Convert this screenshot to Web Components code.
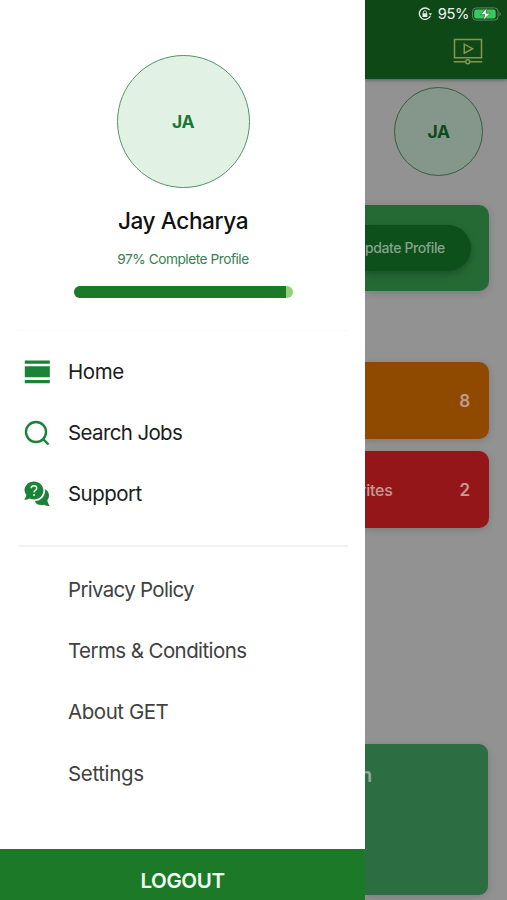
<!DOCTYPE html>
<html lang="en">
<head>
  <meta charset="UTF-8">
  <meta name="viewport" content="width=device-width, initial-scale=1.0">
  <title>GET Jobs</title>
  <style>
    body {
      margin: 0;
      height: 900px;
      overflow: hidden;
      font-family: Inter, "Liberation Sans", sans-serif;
    }
  </style>
</head>
<body>
  <app-shell>
    <side-drawer slot="drawer">
      <drawer-profile slot="profile" percent="97">
        <user-avatar slot="avatar" size="133">JA</user-avatar>
        <span slot="name">Jay Acharya</span>
        <span slot="status">97% Complete Profile</span>
      </drawer-profile>
      <menu-item slot="main" icon="home" spacing="-0.45px">Home</menu-item>
      <menu-item slot="main" icon="search" spacing="-0.63px">Search Jobs</menu-item>
      <menu-item slot="main" icon="support" spacing="-0.55px">Support</menu-item>
      <menu-item slot="more" spacing="-0.7px">Privacy Policy</menu-item>
      <menu-item slot="more" spacing="-0.58px">Terms &amp; Conditions</menu-item>
      <menu-item slot="more" spacing="-0.45px">About GET</menu-item>
      <menu-item slot="more" spacing="-0.35px">Settings</menu-item>
      <span slot="logout">LOGOUT</span>
    </side-drawer>
    <dashboard-page>
      <status-bar slot="top">95%</status-bar>
      <user-avatar slot="avatar" size="89" dim>JA</user-avatar>
      <span slot="action">pdate Profile</span>
      <stat-card slot="stats" color="#8f4a00" count="8"></stat-card>
      <stat-card slot="stats" color="#951619" count="2">rites</stat-card>
      <span slot="promo">n</span>
    </dashboard-page>
  </app-shell>

  <script>
    const icons = {
      home: `<svg width="26" height="26" viewBox="0 0 26 26" fill="#1b8238">
        <path d="M.8 1.500h25v3.200H.8zM.8 7.300h25v11H.8zM.8 21h25v3.200H.8z"/>
      </svg>`,
      search: `<svg width="26" height="26" viewBox="0 0 26 26" fill="none" stroke="#1b8238" stroke-width="2.400">
        <circle cx="12" cy="12" r="10"/>
        <path d="M19 19.100l5.600 5.400"/>
      </svg>`,
      support: `<svg width="26" height="26" viewBox="0 0 26 26" fill="#1b8238">
        <path d="M21.200 8.300c2.300 1.200 3.800 3.500 3.800 6.200 0 1.800-.6 3.300-1.600 4.600.1 2 .8 3.700 2 5.400v.6c-2 0-3.900-.5-5.500-1.400-4.500 1.300-8.300-.6-9.200-3.600 6.500 0 10.700-5.100 10.500-11.800z"/>
        <path d="M9.900.5c5.300 0 9.500 3.900 9.500 8.900s-4.200 9-9.500 9c-1.500 0-3-.4-4.200-1-1.600.8-3.400 1.300-5.200 1.300v-.6c1.100-1.300 1.700-2.700 1.800-4.300A8.700 8.700 0 0 1 .5 9.400c0-5 4.100-8.900 9.400-8.900z"/>
        <path d="M7.200 7.300c0-3.400 5.500-3.300 5.500-.1 0 2.300-2.700 2-2.700 4.400" fill="none" stroke="#e9f7ec" stroke-width="1.500"/>
        <circle cx="10" cy="14" r="1" fill="#e9f7ec"/>
      </svg>`
    };

    class AppShell extends HTMLElement {
      constructor() {
        super();
        this.attachShadow({ mode: 'open' });
        this.shadowRoot.innerHTML = `
          <style>
            :host {
              display: grid;
              grid-template-columns: 365px 1fr;
              height: 900px;
              overflow: hidden;
            }
          </style>
          <slot name="drawer"></slot>
          <slot></slot>
        `;
      }
    }

    class UserAvatar extends HTMLElement {
      constructor() {
        super();
        this.attachShadow({ mode: 'open' });
        const size = this.getAttribute('size');
        this.shadowRoot.innerHTML = `
          <style>
            :host {
              display: flex;
              align-items: center;
              justify-content: center;
              box-sizing: border-box;
              width: ${size}px;
              height: ${size}px;
              border: 1.5px solid #55936b;
              border-radius: 50%;
              background: #e1f2e4;
              color: #1d7634;
              font-size: 17.5px;
              font-weight: 700;
              letter-spacing: -.5px;
            }
            :host([dim]) {
              border-color: #34603f;
              background: #85968a;
              color: #0f4a1d;
            }
          </style>
          <slot></slot>
        `;
      }
    }

    class DrawerProfile extends HTMLElement {
      constructor() {
        super();
        this.attachShadow({ mode: 'open' });
        this.shadowRoot.innerHTML = `
          <style>
            :host {
              display: flex;
              flex: none;
              flex-direction: column;
              align-items: center;
              box-sizing: border-box;
              height: 330px;
              padding: 55px 0 0 1px;
            }
            .name {
              margin-top: 18px;
              font-size: 22.6px;
              line-height: 30px;
              font-weight: 500;
              letter-spacing: -.4px;
              color: #111;
            }
            .status {
              margin-top: 13px;
              font-size: 13.7px;
              line-height: 20px;
              letter-spacing: -.47px;
              color: #388052;
            }
            .bar {
              width: 219px;
              height: 12px;
              margin-top: 17px;
              border-radius: 6px;
              background: #94cf79;
              overflow: hidden;
            }
            .fill {
              width: ${this.getAttribute('percent')}%;
              height: 100%;
              background: #1b7928;
            }
          </style>
          <slot name="avatar"></slot>
          <div class="name"><slot name="name"></slot></div>
          <div class="status"><slot name="status"></slot></div>
          <div class="bar"><div class="fill"></div></div>
        `;
      }
    }

    class MenuItem extends HTMLElement {
      constructor() {
        super();
        this.attachShadow({ mode: 'open' });
        const icon = this.getAttribute('icon');
        this.shadowRoot.innerHTML = `
          <style>
            :host {
              display: grid;
              grid-template-columns: 26px 1fr;
              column-gap: 18px;
              align-items: center;
              height: 61.2px;
              padding-left: 24px;
              font-size: 20.5px;
              letter-spacing: ${this.getAttribute('spacing')};
              color: ${icon ? '#1c1c1c' : '#414141'};
              white-space: nowrap;
            }
            .icon {
              display: flex;
            }
          </style>
          <div class="icon">${icons[icon] || ''}</div>
          <div><slot></slot></div>
        `;
      }
    }

    class SideDrawer extends HTMLElement {
      constructor() {
        super();
        this.attachShadow({ mode: 'open' });
        this.shadowRoot.innerHTML = `
          <style>
            :host {
              display: flex;
              flex-direction: column;
              height: 900px;
              background: #fff;
              overflow: hidden;
            }
            hr {
              flex: none;
              width: 329px;
              height: 1px;
              margin: 0 0 0 19px;
              border: 0;
              background: #fafafa;
            }
            hr.strong {
              height: 2px;
              background: #f2f2f2;
            }
            nav {
              flex: none;
              padding: 10px 0 20.4px;
            }
            nav.more {
              padding: 12px 0 45px;
            }
            .logout {
              flex: none;
              height: 62px;
              line-height: 63px;
              background: #1b7928;
              color: #f2fff2;
              font-size: 20.5px;
              font-weight: 600;
              letter-spacing: -.4px;
              text-align: center;
            }
          </style>
          <slot name="profile"></slot>
          <hr>
          <nav><slot name="main"></slot></nav>
          <hr class="strong">
          <nav class="more"><slot name="more"></slot></nav>
          <div class="logout"><slot name="logout"></slot></div>
        `;
      }
    }

    class StatusBar extends HTMLElement {
      constructor() {
        super();
        this.attachShadow({ mode: 'open' });
        this.shadowRoot.innerHTML = `
          <style>
            :host {
              display: flex;
              align-items: center;
              justify-content: flex-end;
              height: 27px;
              padding-right: 6px;
              color: #eef3ee;
              font-size: 14.7px;
              letter-spacing: -.4px;
            }
            .lock { margin-right: 6px; }
            .battery { margin-left: 3px; }
          </style>
          <svg class="lock" width="14" height="14" viewBox="0 0 14 14" fill="none" stroke="#e5eee5">
            <path d="M11.600 3.200A5.700 5.700 0 1 0 12.300 9" stroke-width="1.300"/>
            <path d="M10.800 6.200h3.200l-1.600 2.600z" fill="#e5eee5" stroke="none"/>
            <path d="M5.400 6.500V5.300c0-2 3-2 3 0v1.200" stroke-width="1"/>
            <path d="M4.500 6.300h4.800v3.700H4.500z" fill="#e5eee5" stroke="none"/>
          </svg>
          <slot></slot>
          <svg class="battery" width="29" height="14" viewBox="0 0 29 14">
            <rect x=".6" y=".9" width="25.500" height="12.200" rx="3.600" fill="none" stroke="#5f8765"/>
            <rect x="2.200" y="2.500" width="21.500" height="9" rx="2.200" fill="#38c862"/>
            <path d="M27.500 4.800c1.600.8 1.600 3.600 0 4.400z" fill="#5f8765"/>
            <path d="M15 .8L8.500 7.600h4.200L11.400 13.200l6.900-7h-4.400z" fill="#fff" stroke="#125020" stroke-width=".6"/>
          </svg>
        `;
      }
    }

    class StatCard extends HTMLElement {
      constructor() {
        super();
        this.attachShadow({ mode: 'open' });
        this.shadowRoot.innerHTML = `
          <style>
            :host {
              display: flex;
              align-items: center;
              justify-content: space-between;
              box-sizing: border-box;
              width: 124px;
              height: 77px;
              padding-right: 19px;
              border-radius: 0 10px 10px 0;
              background: ${this.getAttribute('color')};
              box-shadow: 0 2px 7px rgba(0, 0, 0, .16);
              color: #c49a92;
              font-size: 16px;
              font-weight: 500;
              letter-spacing: -.2px;
            }
            .label {
              margin-left: -5px;
            }
            .count {
              font-size: 17px;
              font-weight: 600;
            }
          </style>
          <span class="label"><slot></slot></span>
          <span class="count">${this.getAttribute('count')}</span>
        `;
      }
    }

    class DashboardPage extends HTMLElement {
      constructor() {
        super();
        this.attachShadow({ mode: 'open' });
        this.shadowRoot.innerHTML = `
          <style>
            :host {
              display: flex;
              flex-direction: column;
              height: 900px;
              background: #929292;
              overflow: hidden;
            }
            header {
              display: flex;
              flex-direction: column;
              height: 79px;
              background: #0f4817;
              box-shadow: 0 1px 4px rgba(0, 0, 0, .4);
            }
            .video {
              align-self: flex-end;
              margin: 11px 24px 0 0;
            }
            .avatar {
              padding: 8px 0 0 29px;
            }
            .update {
              display: flex;
              align-items: center;
              box-sizing: border-box;
              width: 124px;
              height: 86px;
              margin-top: 29px;
              border-radius: 0 10px 10px 0;
              background: #256a35;
              box-shadow: 0 2px 8px rgba(0, 0, 0, .16);
            }
            .button {
              width: 106px;
              height: 46px;
              line-height: 45px;
              border-radius: 0 23px 23px 0;
              background: #0e501b;
              box-shadow: 0 3px 7px rgba(0, 0, 0, .25);
              color: #85a38a;
              font-size: 14px;
              font-weight: 500;
              letter-spacing: -.4px;
              white-space: nowrap;
            }
            .stats {
              display: flex;
              flex-direction: column;
              gap: 12px;
              margin-top: 71px;
            }
            .promo {
              box-sizing: border-box;
              width: 123px;
              height: 151px;
              margin-top: 216px;
              padding-top: 17px;
              border-radius: 0 9px 9px 0;
              background: #2c6d41;
              box-shadow: 0 2px 8px rgba(0, 0, 0, .14);
              color: #91aa97;
              font-size: 20px;
              line-height: 28px;
              font-weight: 600;
              text-indent: -5px;
            }
          </style>
          <header>
            <slot name="top"></slot>
            <svg class="video" width="30" height="27" viewBox="0 0 30 27" fill="none" stroke="#8c944a" stroke-width="1.500">
              <path d="M1.500 1.500h27v18.300h-27z"/>
              <path d="M11.300 6.200v9l8.300-4.500z"/>
              <path d="M.7 23.700h11.800M17.200 23.700h12"/>
              <circle cx="14.800" cy="23.700" r="2"/>
            </svg>
          </header>
          <div class="avatar"><slot name="avatar"></slot></div>
          <div class="update"><div class="button"><slot name="action"></slot></div></div>
          <div class="stats"><slot name="stats"></slot></div>
          <div class="promo"><slot name="promo"></slot></div>
        `;
      }
    }

    customElements.define('app-shell', AppShell);
    customElements.define('user-avatar', UserAvatar);
    customElements.define('drawer-profile', DrawerProfile);
    customElements.define('menu-item', MenuItem);
    customElements.define('side-drawer', SideDrawer);
    customElements.define('status-bar', StatusBar);
    customElements.define('stat-card', StatCard);
    customElements.define('dashboard-page', DashboardPage);
  </script>
</body>
</html>
